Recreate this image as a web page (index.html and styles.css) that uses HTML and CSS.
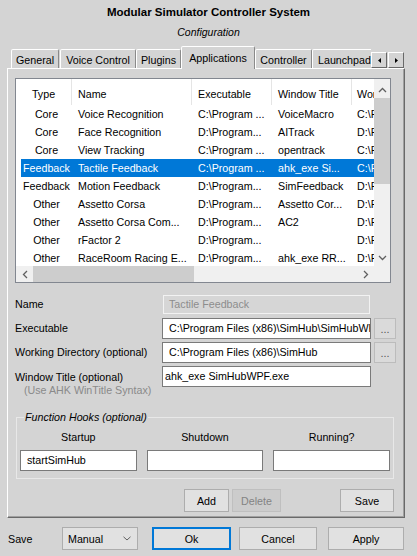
FILE: index.html
```html
<!DOCTYPE html>
<html>
<head>
<meta charset="utf-8">
<title>Modular Simulator Controller System</title>
<link rel="stylesheet" href="styles.css">
</head>
<body>
<div class="title">Modular Simulator Controller System</div>
<div class="subtitle">Configuration</div>

<div class="tabbar">
  <div class="tabs">
    <div class="tab t-general">General</div>
    <div class="tab t-voice">Voice Control</div>
    <div class="tab t-plugins">Plugins</div>
    <div class="tab t-apps active">Applications</div>
    <div class="tab t-controller">Controller</div>
    <div class="tab">Launchpad</div>
    <div class="tab">Chat</div>
  </div>
  <div class="tab-arrows">
    <div class="tab-arrow"><svg width="3" height="5" viewBox="0 0 3 5"><path d="M3 0 L0 2.5 L3 5 Z" fill="#000"/></svg></div>
    <div class="tab-arrow"><svg width="3" height="5" viewBox="0 0 3 5"><path d="M0 0 L3 2.5 L0 5 Z" fill="#000"/></svg></div>
  </div>
</div>

<div class="panel">
  <div class="listview">
    <div class="lv-main">
      <div class="lv-header">
        <div class="cell c-type center">Type</div>
        <div class="cell c-name">Name</div>
        <div class="cell c-exe">Executable</div>
        <div class="cell c-wt">Window Title</div>
        <div class="cell c-wo">Working Directory</div>
      </div>
      <div class="lv-body">
        <div class="row"><div class="cell c-type center">Core</div><div class="cell c-name">Voice Recognition</div><div class="cell c-exe">C:\Program ...</div><div class="cell c-wt">VoiceMacro</div><div class="cell c-wo">C:\Program Files</div></div>
        <div class="row"><div class="cell c-type center">Core</div><div class="cell c-name">Face Recognition</div><div class="cell c-exe">D:\Program...</div><div class="cell c-wt">AITrack</div><div class="cell c-wo">D:\Programs</div></div>
        <div class="row"><div class="cell c-type center">Core</div><div class="cell c-name">View Tracking</div><div class="cell c-exe">C:\Program ...</div><div class="cell c-wt">opentrack</div><div class="cell c-wo">C:\Program Files</div></div>
        <div class="row selected"><div class="cell c-type center">Feedback</div><div class="cell c-name">Tactile Feedback</div><div class="cell c-exe">C:\Program ...</div><div class="cell c-wt">ahk_exe Si...</div><div class="cell c-wo">C:\Program Files</div></div>
        <div class="row"><div class="cell c-type center">Feedback</div><div class="cell c-name">Motion Feedback</div><div class="cell c-exe">D:\Program...</div><div class="cell c-wt">SimFeedback</div><div class="cell c-wo">D:\Programs</div></div>
        <div class="row"><div class="cell c-type center">Other</div><div class="cell c-name">Assetto Corsa</div><div class="cell c-exe">D:\Program...</div><div class="cell c-wt">Assetto Cor...</div><div class="cell c-wo">D:\Programs</div></div>
        <div class="row"><div class="cell c-type center">Other</div><div class="cell c-name">Assetto Corsa Com...</div><div class="cell c-exe">D:\Program...</div><div class="cell c-wt">AC2</div><div class="cell c-wo">D:\Programs</div></div>
        <div class="row"><div class="cell c-type center">Other</div><div class="cell c-name">rFactor 2</div><div class="cell c-exe">D:\Program...</div><div class="cell c-wt"></div><div class="cell c-wo">D:\Programs</div></div>
        <div class="row"><div class="cell c-type center">Other</div><div class="cell c-name">RaceRoom Racing E...</div><div class="cell c-exe">D:\Program...</div><div class="cell c-wt">ahk_exe RR...</div><div class="cell c-wo">D:\Programs</div></div>
      </div>
    </div>
    <div class="vscroll">
      <div class="sb-btn up"><svg width="9" height="6" viewBox="0 0 9 6"><path d="M1 5 L4.5 1.5 L8 5" fill="none" stroke="#606060" stroke-width="1.3"/></svg></div>
      <div class="v-thumb"></div>
      <div class="sb-fill"></div>
      <div class="sb-btn"><svg width="9" height="6" viewBox="0 0 9 6"><path d="M1 1 L4.5 4.5 L8 1" fill="none" stroke="#606060" stroke-width="1.3"/></svg></div>
    </div>
    <div class="hscroll">
      <div class="sb-btn h"><svg width="6" height="9" viewBox="0 0 6 9"><path d="M5 1 L1.5 4.5 L5 8" fill="none" stroke="#606060" stroke-width="1.3"/></svg></div>
      <div class="h-thumb"></div>
      <div class="sb-fill"></div>
      <div class="sb-btn h"><svg width="6" height="9" viewBox="0 0 6 9"><path d="M1 1 L4.5 4.5 L1 8" fill="none" stroke="#606060" stroke-width="1.3"/></svg></div>
    </div>
    <div class="corner"></div>
  </div>

  <div class="form">
    <div class="label">Name</div>
    <div class="field disabled">Tactile Feedback</div>
    <div></div>

    <div class="label">Executable</div>
    <div class="field">C:\Program Files (x86)\SimHub\SimHubWPF.exe</div>
    <div class="btn dots">...</div>

    <div class="label">Working Directory (optional)</div>
    <div class="field">C:\Program Files (x86)\SimHub</div>
    <div class="btn dots">...</div>

    <div class="label multi">Window Title (optional)<div class="hint">(Use AHK WinTitle Syntax)</div></div>
    <div class="field tight">ahk_exe SimHubWPF.exe</div>
    <div></div>
  </div>

  <fieldset class="hooks">
    <legend>Function Hooks (optional)</legend>
    <div class="hook-grid">
      <div class="hook-label">Startup</div>
      <div class="hook-label">Shutdown</div>
      <div class="hook-label">Running?</div>
      <div class="field hook">startSimHub</div>
      <div class="field hook"></div>
      <div class="field hook"></div>
    </div>
  </fieldset>

  <div class="actions">
    <div class="btn add">Add</div>
    <div class="btn del disabled-btn">Delete</div>
    <div class="btn save">Save</div>
  </div>
</div>

<div class="bottom">
  <div class="save-label">Save</div>
  <div class="combo">
    <span>Manual</span>
    <svg width="8" height="5" viewBox="0 0 8 5"><path d="M0.5 0.8 L4 4 L7.5 0.8" fill="none" stroke="#606060" stroke-width="1"/></svg>
  </div>
  <div class="btn ok">Ok</div>
  <div class="btn cancel">Cancel</div>
  <div class="btn apply">Apply</div>
</div>
</body>
</html>
```
FILE: styles.css
```css
* { box-sizing: border-box; }
html, body { margin: 0; padding: 0; }
body {
  width: 417px;
  height: 556px;
  overflow: hidden;
  background: #d4d4d4;
  font-family: "Liberation Sans", Arial, sans-serif;
  font-size: 10.7px;
  color: #000;
}

.title {
  padding-top: 5px;
  text-align: center;
  font-weight: bold;
  font-size: 11.5px;
  line-height: 14px;
}
.subtitle {
  margin-top: 6px;
  text-align: center;
  font-style: italic;
  font-size: 10.5px;
  line-height: 14px;
}

/* Tabs */
.tabbar {
  display: flex;
  align-items: flex-end;
  height: 23px;
  margin: 7px 0 0 11px;
  width: 393px;
}
.tabs {
  display: flex;
  align-items: flex-end;
  width: 360px;
  height: 23px;
  overflow: hidden;
}
.tab {
  flex: none;
  height: 19px;
  margin-bottom: 1px;
  padding: 2px 5px 0;
  line-height: 16px;
  text-align: center;
  white-space: nowrap;
  border: 1px solid;
  border-bottom: none;
  border-color: #fff #8a8a8a transparent #fff;
  border-radius: 2px 2px 0 0;
  background: #d4d4d4;
}
.t-general { width: 48px; margin-right: 1px; padding: 2px 0 0; }
.t-voice { width: 76px; padding: 2px 0 0; }
.t-plugins { width: 45px; padding: 2px 0 0; }
.t-apps { width: 74px; padding: 3px 0 0; }
.t-controller { width: 57px; padding: 2px 0 0; }
.tab.active {
  position: relative;
  z-index: 1;
  height: 23px;
  margin-bottom: 0;
}
.tab-arrows {
  display: flex;
  gap: 1px;
  margin-bottom: 1px;
}
.tab-arrow {
  width: 16px;
  height: 16px;
  display: flex;
  align-items: center;
  justify-content: center;
  background: #d4d4d4;
  border: 1px solid;
  border-color: #fff #696969 #696969 #fff;
}

/* Panel */
.panel {
  margin: -1px 12px 0 7px;
  height: 450px;
  padding: 9px 0 0 7px;
  border: 1px solid;
  border-color: #fff #696969 #696969 #fff;
  box-shadow: inset -1px -1px 0 #a0a0a0;
}

/* List view */
.listview {
  width: 376px;
  height: 205px;
  border: 1px solid #828790;
  background: #fff;
  display: grid;
  grid-template-columns: 1fr 16px;
  grid-template-rows: 1fr 16px;
}
.lv-main { overflow: hidden; }
.lv-header, .row {
  display: flex;
  white-space: nowrap;
}
.lv-header { height: 26px; }
.lv-header .cell {
  padding-top: 8px;
  line-height: 14px;
  border-right: 1px solid #e5e5e5;
}
.cell {
  flex: none;
  overflow: hidden;
  padding-left: 6px;
}
.cell.center { text-align: center; padding-left: 0; }
.c-type { width: 56px; }
.c-name { width: 120px; }
.c-exe { width: 80px; }
.c-wt { width: 80px; }
.c-wo { width: 80px; padding-left: 5px; }
.row { height: 18px; line-height: 18px; }
.row .c-type { padding-left: 5px; }
.row.selected {
  background: linear-gradient(to right, transparent 5px, #0078d7 5px);
  color: #fff;
}

.vscroll {
  grid-row: 1;
  grid-column: 2;
  background: #f0f0f0;
  display: flex;
  flex-direction: column;
}
.sb-btn {
  flex: none;
  height: 17px;
  display: flex;
  align-items: center;
  justify-content: center;
}
.sb-btn.up { padding-top: 3px; height: 19px; }
.sb-btn.h { height: auto; width: 17px; }
.sb-fill { flex: 1; }
.v-thumb {
  flex: none;
  height: 86px;
  background: #cdcdcd;
}
.hscroll {
  grid-row: 2;
  grid-column: 1;
  background: #f0f0f0;
  display: flex;
}
.h-thumb {
  flex: none;
  width: 161px;
  background: #cdcdcd;
}
.corner {
  grid-row: 2;
  grid-column: 2;
  background: #f0f0f0;
}

/* Form */
.form {
  margin-top: 11px;
  display: grid;
  grid-template-columns: 144px 209px 22px;
  grid-auto-rows: minmax(21px, auto);
  column-gap: 3px;
  row-gap: 3px;
}
.label { line-height: 21px; white-space: nowrap; }
.label.multi { line-height: 13px; padding-top: 5px; }
.hint { color: #8a8a8a; padding-left: 9px; }
.field {
  min-width: 0;
  height: 21px;
  border: 1px solid #7a7a7a;
  background: #fff;
  padding-left: 6px;
  line-height: 19px;
  white-space: nowrap;
  overflow: hidden;
}
.field.tight { padding-left: 2px; }
.field.disabled {
  height: 19px;
  margin: 1px;
  line-height: 17px;
  padding-left: 5px;
  background: #d6d6d6;
  border-color: #f2f2f2;
  color: #8d8d8d;
}

.btn {
  height: 21px;
  display: flex;
  align-items: center;
  justify-content: center;
  background: #e1e1e1;
  border: 1px solid #adadad;
  white-space: nowrap;
}
.btn.dots { color: #555; background: #dadada; border-color: #bcbcbc; }

/* Group box */
.hooks {
  margin: 13px 0 0 1px;
  width: 378px;
  min-width: 0;
  padding: 0 3px 7px;
  border: 1px solid #e8e8e8;
}
.hooks legend {
  margin-left: 4px;
  padding: 0 1px;
  font-style: italic;
  line-height: 14px;
}
.hook-grid {
  display: grid;
  grid-template-columns: 1fr 1fr 1fr;
  column-gap: 10px;
  padding-top: 6px;
}
.hook-label {
  text-align: center;
  line-height: 14px;
  margin-bottom: 6px;
}
.field.hook { padding-left: 6px; }

.actions {
  display: flex;
  justify-content: flex-end;
  width: 379px;
  margin-top: 10px;
}
.actions .btn { height: 23px; }
.btn.add { width: 45px; margin-right: 3px; }
.btn.del { width: 49px; margin-right: 59px; }
.btn.save { width: 54px; }
.disabled-btn {
  background: #cccccc;
  border-color: #bfbfbf;
  color: #838383;
}

/* Bottom bar */
.bottom {
  display: flex;
  align-items: center;
  height: 23px;
  margin-top: 9px;
  padding-left: 8px;
}
.save-label { width: 54px; }
.combo {
  width: 76px;
  height: 23px;
  margin-right: 14px;
  display: flex;
  align-items: center;
  justify-content: space-between;
  padding: 0 6px 0 5px;
  background: #e1e1e1;
  border: 1px solid #adadad;
}
.bottom .btn { height: 23px; }
.btn.ok {
  width: 79px;
  margin-right: 8px;
  border-color: #0078d7;
  box-shadow: inset 0 0 0 1px #0078d7;
}
.btn.cancel { width: 78px; margin-right: 11px; }
.btn.apply { width: 76px; }
```
